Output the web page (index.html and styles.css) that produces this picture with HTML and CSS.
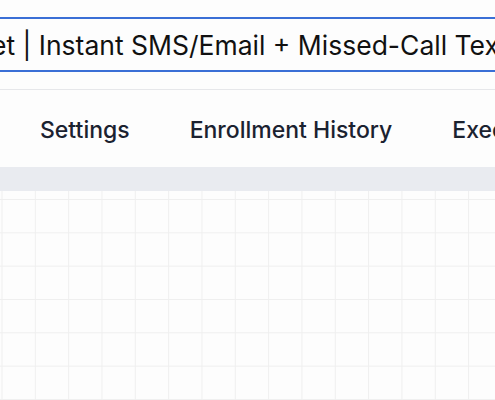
FILE: index.html
```html
<!DOCTYPE html>
<html>
<head>
<meta charset="utf-8">
<link rel="stylesheet" href="styles.css">
</head>
<body>
<div class="page">
  <header class="title-area">
    <div class="title-input">
      <span class="title-text">et | Instant SMS/Email + Missed-Call Text Back</span>
    </div>
  </header>
  <nav class="tabs">
    <span class="tab">Settings</span>
    <span class="tab">Enrollment History</span>
    <span class="tab">Execution Logs</span>
  </nav>
  <div class="band"></div>
  <main class="canvas"></main>
</div>
</body>
</html>
```

FILE: styles.css
```css
html, body {
  margin: 0;
  padding: 0;
  overflow: hidden;
  background: #fdfdfd;
}
.page {
  width: 495px;
  height: 400px;
  display: flex;
  flex-direction: column;
  overflow: hidden;
  font-family: Inter, "Liberation Sans", sans-serif;
}
.title-area {
  height: 90px;
  flex: none;
  padding-top: 17px;
  box-sizing: border-box;
  border-bottom: 1px solid #e6e7ea;
  background: #fdfdfd;
}
.title-input {
  margin-left: -20px;
  width: 560px;
  height: 55px;
  box-sizing: border-box;
  border: 2px solid #3a6fd6;
  border-radius: 4px;
  display: flex;
  align-items: center;
  padding-left: 20px;
  overflow: hidden;
  white-space: nowrap;
}
.title-text {
  font-size: 26.5px;
  color: #111;
  font-weight: 400;
  margin-left: -11px;
}
.tabs {
  height: 77px;
  flex: none;
  display: flex;
  align-items: center;
  gap: 60px;
  padding-left: 40px;
  padding-top: 2px;
  box-sizing: border-box;
  white-space: nowrap;
  background: #fdfdfd;
}
.tab {
  font-size: 23px;
  font-weight: 500;
  color: #1b2230;
}
.band {
  height: 24px;
  flex: none;
  background: #e9ebf0;
}
.canvas {
  flex: 1;
  background-color: #fdfdfd;
  background-image:
    linear-gradient(to right, #efefef 1px, transparent 1px),
    linear-gradient(to bottom, #efefef 1px, transparent 1px);
  background-size: 33.33px 33.33px;
  background-position: 1.5px 8px;
}
```
